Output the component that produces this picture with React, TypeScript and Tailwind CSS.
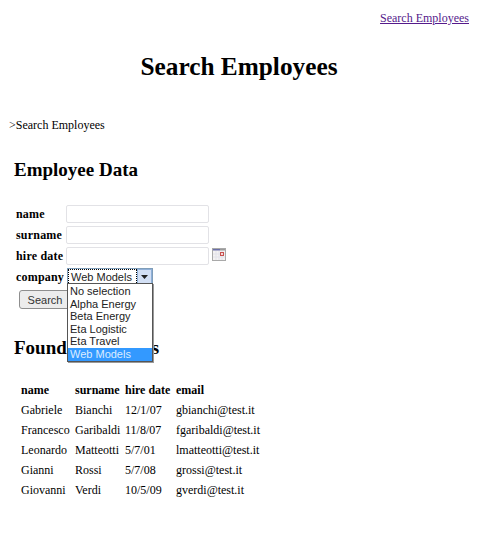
export default function App() {
  const rows = [
    ["Gabriele", "Bianchi", "12/1/07", "gbianchi@test.it"],
    ["Francesco", "Garibaldi", "11/8/07", "fgaribaldi@test.it"],
    ["Leonardo", "Matteotti", "5/7/01", "lmatteotti@test.it"],
    ["Gianni", "Rossi", "5/7/08", "grossi@test.it"],
    ["Giovanni", "Verdi", "10/5/09", "gverdi@test.it"],
  ];
  const options = ["No selection", "Alpha Energy", "Beta Energy", "Eta Logistic", "Eta Travel"];
  const inputCls = "w-[143px] h-[18px] bg-white border border-[#e2e2e6] rounded-[2px]";
  const labelCls = "w-[50px] text-[12px] font-bold leading-[18px] tracking-[0.2px] whitespace-nowrap";
  return (
    <div className="w-[478px] h-[548px] bg-white overflow-hidden text-black font-['Liberation_Serif',serif]">
      <div className="flex justify-end pr-[9px] pt-[11px] h-[40px]">
        <a href="#" className="text-[12px] leading-[14px] underline text-[#551a8b]">Search Employees</a>
      </div>
      <h1 className="mt-[11px] text-center text-[25.3px] font-bold leading-[30px]">Search Employees</h1>
      <p className="mt-[37px] pl-[9px] text-[12px] leading-[14px]">&gt;Search Employees</p>
      <h2 className="mt-[26px] pl-[14px] text-[19px] font-bold leading-[24px]">Employee Data</h2>

      <div className="relative mt-[23px] pl-[16px]">
        <div className="flex flex-col gap-[3px]">
          <div className="flex items-center gap-0">
            <span className={labelCls}>name</span>
            <div className={inputCls} />
          </div>
          <div className="flex items-center">
            <span className={labelCls}>surname</span>
            <div className={inputCls} />
          </div>
          <div className="flex items-center">
            <span className={labelCls}>hire date</span>
            <div className={inputCls} />
            <svg width="14" height="13" viewBox="0 0 14 13" className="ml-[3px] -mt-[3px]">
              <rect x="0.5" y="0.5" width="13" height="12" fill="#f4f2f2" stroke="#a9a9a9" />
              <rect x="1" y="1" width="7" height="1.5" fill="#6a6fa8" />
              <rect x="8" y="1" width="5" height="1.5" fill="#9a9a9a" />
              <path d="M1 6h12M1 9h12M4 3v9M7 3v9M10 3v9" stroke="#e2e2ea" strokeWidth="1" />
              <rect x="8.5" y="4.5" width="3" height="3" fill="#f3d6d6" stroke="#c8524f" />
            </svg>
          </div>
          <div className="flex items-center">
            <span className={labelCls}>company</span>
            <div className="flex ml-[1px] w-[86px] h-[18px] border border-[#7f9db9] bg-white font-['Liberation_Sans',sans-serif] text-[11px]">
              <span className="flex-1 border border-dotted border-black leading-[14px] pl-[2px] text-[#222]">Web Models</span>
              <span className="flex items-center justify-center w-[15px] bg-[#d3e0f5] border border-[#8fb0d8]">
                <svg width="7" height="4" viewBox="0 0 7 4"><path d="M0 0h7L3.5 4z" fill="#222" /></svg>
              </span>
            </div>
          </div>
        </div>
        <button className="block mt-[4px] ml-[3px] w-[52px] h-[19px] rounded-[3px] border border-[#8e8e8e] bg-[#ececec] font-['Liberation_Sans',sans-serif] text-[11px] leading-[16px] text-[#333] text-center">Search</button>
        <div className="absolute left-[67px] top-[78px] w-[86px] border border-[#555] bg-white pt-[1px] font-['Liberation_Sans',sans-serif] text-[11px] leading-[12.6px] text-[#222] shadow-[1px_1px_0_#999]">
          {options.map((o) => (
            <div key={o} className="pl-[2px]">{o}</div>
          ))}
          <div className="pl-[2px] bg-[#3399ff] text-[#dcecff]">Web Models</div>
        </div>
      </div>

      <h2 className="mt-[27px] pl-[14px] text-[19px] font-bold leading-[24px]">Found Employees</h2>
      <table className="mt-[20px] ml-[19px] text-[12px] border-separate border-spacing-0">
        <thead>
          <tr className="h-[20px] text-left">
            <th className="pl-[2px] w-[56px] font-bold">name</th>
            <th className="pl-0 w-[50px] font-bold whitespace-nowrap">surname</th>
            <th className="pl-0 w-[51px] font-bold whitespace-nowrap">hire date</th>
            <th className="font-bold">email</th>
          </tr>
        </thead>
        <tbody>
          {rows.map((r) => (
            <tr key={r[0]} className="h-[20px]">
              <td className="pl-[2px]">{r[0]}</td>
              <td>{r[1]}</td>
              <td>{r[2]}</td>
              <td>{r[3]}</td>
            </tr>
          ))}
        </tbody>
      </table>
    </div>
  );
}
